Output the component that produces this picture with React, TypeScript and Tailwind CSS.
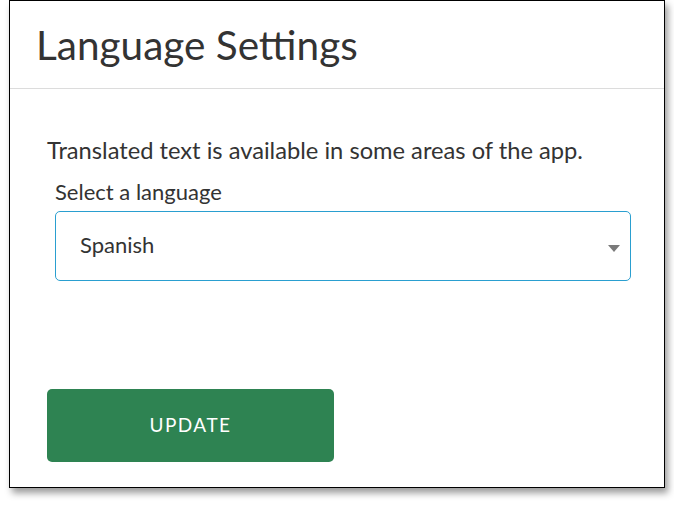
export default function App() {
  return (
    <div className="w-[674px] h-[506px] bg-white font-['Lato',sans-serif] text-[#333]">
      <div className="ml-[9px] w-[656px] h-[488px] border border-black bg-white shadow-[3px_5px_7px_rgba(0,0,0,0.4)]">
        <div className="h-[88px] border-b border-[#dcdcdc] pl-[26px] pt-[20px]">
          <h1 className="text-[40.5px] leading-[48px] text-[#333]">Language Settings</h1>
        </div>
        <div className="pl-[37px] pt-[47px]">
          <p className="text-[23.7px] leading-[28px] text-[#333]">
            Translated text is available in some areas of the app.
          </p>
          <div className="ml-[8px] mt-[15px] w-[576px]">
            <label className="block text-[22px] leading-[26px] text-[#333]">Select a language</label>
            <div className="mt-[6px] h-[70px] rounded-[5px] border border-[#2a9fd0] flex items-center justify-between pl-[24px] pr-[10px]">
              <span className="text-[22px] text-[#333] -mt-[4px]">Spanish</span>
              <svg width="12" height="7" viewBox="0 0 12 7" className="mt-[4px]">
                <path d="M0 0 H12 L6 7 Z" fill="#7a7a7a" />
              </svg>
            </div>
          </div>
          <button className="mt-[108px] w-[287px] h-[73px] rounded-[5px] bg-[#2e8352] text-white text-[19px] tracking-[1.5px]">
            UPDATE
          </button>
        </div>
      </div>
    </div>
  );
}
